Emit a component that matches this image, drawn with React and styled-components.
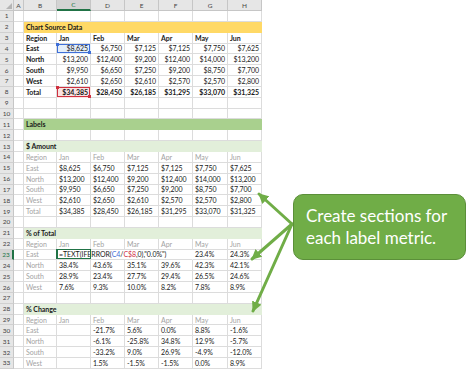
import React from 'react';
import styled, { createGlobalStyle, css } from 'styled-components';

const GlobalStyle = createGlobalStyle`
  html, body {
    margin: 0;
    padding: 0;
    background: #fff;
  }
`;

const COLS = ['A', 'B', 'C', 'D', 'E', 'F', 'G', 'H'];
const MONTHS = ['Jan', 'Feb', 'Mar', 'Apr', 'May', 'Jun'];

const FILLS = {
  yellow: '#FFD966',
  green: '#A9D08E',
  pale: '#E2EFDA',
};

const Page = styled.div`
  position: relative;
  width: 470px;
  height: 373px;
  overflow: hidden;
  font-family: Lato, 'Liberation Sans', sans-serif;
`;

const Sheet = styled.div`
  display: grid;
  grid-template-columns: 14px 10px 33px 34px 34px 34px 34px 35px 34px;
  grid-template-rows: 11px;
  grid-auto-rows: 10.85px;
  width: 262px;
  font-size: 7px;
  letter-spacing: -0.05px;
  color: #1a1a1a;
`;

const Corner = styled.div`
  position: relative;
  background: #e6e6e6;
  border-right: 1px solid #c6c6c6;
  border-bottom: 1px solid #c6c6c6;
  box-sizing: border-box;

  &::after {
    content: '';
    position: absolute;
    right: 1px;
    bottom: 1px;
    border-left: 6px solid transparent;
    border-bottom: 6px solid #b4b4b4;
  }
`;

const ColHead = styled.div`
  display: flex;
  align-items: center;
  justify-content: center;
  box-sizing: border-box;
  font-size: 6.5px;
  background: ${p => (p.$active ? '#d3d3d3' : '#e6e6e6')};
  color: ${p => (p.$active ? '#217346' : '#444')};
  border-right: 1px solid #c6c6c6;
  border-bottom: ${p => (p.$active ? '2px solid #217346' : '1px solid #c6c6c6')};
`;

const RowHead = styled.div`
  display: flex;
  align-items: center;
  justify-content: center;
  box-sizing: border-box;
  font-size: 6.5px;
  background: ${p => (p.$active ? '#d3d3d3' : '#e6e6e6')};
  color: ${p => (p.$active ? '#217346' : '#444')};
  border-right: ${p => (p.$active ? '2px solid #217346' : '1px solid #c6c6c6')};
  border-bottom: 1px solid #d0d0d0;
`;

const Cell = styled.div`
  position: relative;
  z-index: ${p => (p.$over ? 1 : 'auto')};
  display: flex;
  align-items: center;
  justify-content: ${p => (p.$right ? 'flex-end' : 'flex-start')};
  box-sizing: border-box;
  padding: 0 2px;
  white-space: nowrap;
  background: ${p => (p.$fill ? FILLS[p.$fill] : '#fff')};
  color: ${p => (p.$muted ? '#a3a3a3' : '#1a1a1a')};
  font-weight: ${p => (p.$bold ? 700 : 400)};
  border-right: 1px solid ${p => (p.$fill || p.$noGrid ? 'transparent' : '#dcdcdc')};
  border-bottom: 1px solid ${p => (p.$fill ? 'transparent' : '#dcdcdc')};
  grid-column: ${p => (p.$span ? `span ${p.$span}` : 'auto')};
  overflow: visible;

  ${p => p.$ref && css`
    background: ${p.$ref === 'blue' ? '#e4eefa' : '#fbe2e2'};
    box-shadow: inset 0 0 0 1px ${p.$ref === 'blue' ? '#3f6fd8' : '#d0303f'};
    border-color: transparent;

    &::before,
    &::after {
      content: '';
      position: absolute;
      width: 3px;
      height: 3px;
      background: ${p.$ref === 'blue' ? '#3f6fd8' : '#d0303f'};
    }
    &::before { left: -1px; top: -1px; }
    &::after { right: -1px; bottom: -1px; }
  `}
`;

const FormulaCell = styled(Cell)`
  z-index: 1;

  &::before {
    content: '';
    position: absolute;
    left: -1px;
    top: -1px;
    width: 35px;
    height: calc(100% + 1px);
    box-sizing: border-box;
    border: 1px solid #217346;
    border-left-width: 2px;
    pointer-events: none;
  }
`;

const RefText = styled.span`
  color: ${p => p.$tone};
`;

const Callout = styled.div`
  position: absolute;
  left: 293px;
  top: 194px;
  width: 173px;
  height: 66px;
  box-sizing: border-box;
  padding: 0 0 1px 12px;
  display: flex;
  flex-direction: column;
  justify-content: center;
  background: #70ad47;
  border: 1px solid #5b8f39;
  border-radius: 10px;
  color: #fff;
  font-family: Lato, 'Liberation Sans', sans-serif;
  font-size: 17px;
  line-height: 22px;
`;

const Arrows = styled.svg`
  position: absolute;
  left: 0;
  top: 0;
  pointer-events: none;
`;

const money = n => '$' + n.toLocaleString('en-US');

const source = [
  ['East', [8625, 6750, 7125, 7125, 7750, 7625]],
  ['North', [13200, 12400, 9200, 12400, 14000, 13200]],
  ['South', [9950, 6650, 7250, 9200, 8750, 7700]],
  ['West', [2610, 2650, 2610, 2570, 2570, 2800]],
  ['Total', [34385, 28450, 26185, 31295, 33070, 31325]],
];

const shares = [
  ['North', ['38.4%', '43.6%', '35.1%', '39.6%', '42.3%', '42.1%']],
  ['South', ['28.9%', '23.4%', '27.7%', '29.4%', '26.5%', '24.6%']],
  ['West', ['7.6%', '9.3%', '10.0%', '8.2%', '7.8%', '8.9%']],
];

const changes = [
  ['East', ['', '-21.7%', '5.6%', '0.0%', '8.8%', '-1.6%']],
  ['North', ['', '-6.1%', '-25.8%', '34.8%', '12.9%', '-5.7%']],
  ['South', ['', '-33.2%', '9.0%', '26.9%', '-4.9%', '-12.0%']],
  ['West', ['', '1.5%', '-1.5%', '-1.5%', '0.0%', '8.9%']],
];

// a plain row: A column blank, then B..H
const Row = ({ n, active, children }) => (
  <>
    <RowHead $active={active}>{n}</RowHead>
    <Cell />
    {children}
  </>
);

const BlankRow = ({ n }) => (
  <Row n={n}>
    {COLS.slice(1).map(c => <Cell key={c} />)}
  </Row>
);

const BandRow = ({ n, fill, title }) => (
  <Row n={n}>
    <Cell $fill={fill} $bold $over>{title}</Cell>
    {MONTHS.map(m => <Cell key={m} $fill={fill} />)}
  </Row>
);

const HeaderRow = ({ n, muted }) => (
  <Row n={n}>
    <Cell $muted={muted} $bold={!muted}>Region</Cell>
    {MONTHS.map(m => <Cell key={m} $muted={muted} $bold={!muted}>{m}</Cell>)}
  </Row>
);

const LabelRow = ({ n, name, values }) => (
  <Row n={n}>
    <Cell $muted>{name}</Cell>
    {values.map((v, i) => <Cell key={i}>{v}</Cell>)}
  </Row>
);

export default function App() {
  return (
    <Page>
      <GlobalStyle />
      <Sheet>
        <Corner />
        {COLS.map(c => (
          <ColHead key={c} $active={c === 'C'}>{c}</ColHead>
        ))}

        <BlankRow n={1} />
        <BandRow n={2} fill="yellow" title="Chart Source Data" />
        <HeaderRow n={3} />
        {source.map(([name, vals], r) => (
          <Row key={name} n={4 + r}>
            <Cell $bold>{name}</Cell>
            {vals.map((v, i) => (
              <Cell
                key={i}
                $right
                $bold={name === 'Total'}
                $ref={i === 0 && r === 0 ? 'blue' : i === 0 && name === 'Total' ? 'red' : undefined}
              >
                {money(v)}
              </Cell>
            ))}
          </Row>
        ))}
        <BlankRow n={9} />
        <BlankRow n={10} />
        <BandRow n={11} fill="green" title="Labels" />
        <BlankRow n={12} />

        <BandRow n={13} fill="pale" title="$ Amount" />
        <HeaderRow n={14} muted />
        {source.map(([name, vals], r) => (
          <LabelRow key={name} n={15 + r} name={name} values={vals.map(money)} />
        ))}
        <BlankRow n={20} />

        <BandRow n={21} fill="pale" title="% of Total" />
        <HeaderRow n={22} muted />
        <Row n={23} active>
          <Cell $muted>East</Cell>
          <FormulaCell $span={4} $noGrid>
            =TEXT(IFERROR(<RefText $tone="#3f6fd8">C4</RefText>/<RefText $tone="#d0303f">C$8</RefText>,0),"0.0%")
          </FormulaCell>
          <Cell>23.4%</Cell>
          <Cell>24.3%</Cell>
        </Row>
        {shares.map(([name, vals], r) => (
          <LabelRow key={name} n={24 + r} name={name} values={vals} />
        ))}
        <BlankRow n={27} />

        <BandRow n={28} fill="pale" title="% Change" />
        <HeaderRow n={29} muted />
        {changes.map(([name, vals], r) => (
          <LabelRow key={name} n={30 + r} name={name} values={vals} />
        ))}
      </Sheet>

      <Arrows width="470" height="373" viewBox="0 0 470 373">
        <defs>
          <marker id="head" viewBox="0 0 10 10" refX="9" refY="5" markerWidth="3.4" markerHeight="3.4" orient="auto">
            <path d="M0 0 L10 5 L0 10 z" fill="#70ad47" />
          </marker>
        </defs>
        <g stroke="#70ad47" strokeWidth="3" strokeLinecap="round" markerEnd="url(#head)">
          <line x1="292" y1="224" x2="259" y2="194" />
          <line x1="292" y1="224" x2="252" y2="259" />
          <line x1="292" y1="224" x2="253" y2="311" />
        </g>
      </Arrows>

      <Callout>
        <span>Create sections for</span>
        <span>each label metric.</span>
      </Callout>
    </Page>
  );
}
